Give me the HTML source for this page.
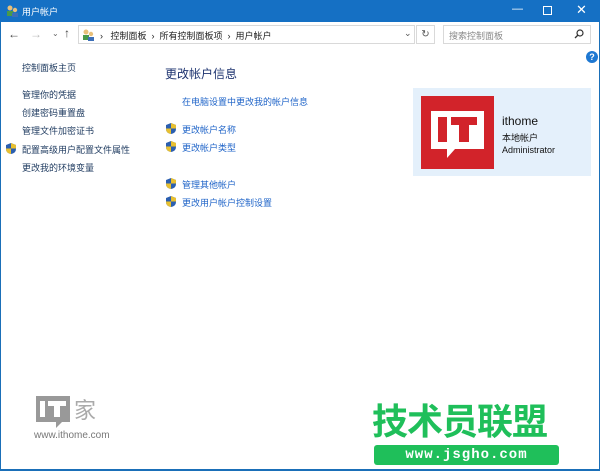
<!DOCTYPE html><html><head><meta charset="utf-8"><style>
*{margin:0;padding:0;box-sizing:border-box}
body{width:600px;height:471px;overflow:hidden;background:#fff;font-family:"Liberation Sans","Noto Sans CJK SC",sans-serif;position:relative}
.a{position:absolute;white-space:nowrap}
.l{font-size:9px;color:#1e3a5f}
.b{font-size:9px;color:#1f64c8}
.sh{position:absolute;width:10px;height:11px}
</style></head><body>
<div class="a" style="left:0;top:0;width:600px;height:22px;background:#1570c4"></div>
<div class="a" style="left:0;top:22px;width:1px;height:449px;background:#1a6fb8"></div>
<div class="a" style="left:599px;top:22px;width:1px;height:449px;background:#1a6fb8"></div>
<div class="a" style="left:0;top:469px;width:600px;height:2px;background:#1a6fb8"></div>
<svg class="a" style="left:6px;top:4px" width="13" height="13"><circle cx="4" cy="4" r="2.5" fill="#e8c07a"/><rect x="1" y="7" width="6" height="5" fill="#4a9a4a"/><circle cx="9" cy="6" r="2.2" fill="#e8c07a"/><rect x="6" y="9" width="6" height="4" fill="#3c6fb8"/></svg>
<div class="a" style="left:22px;top:5px;font-size:9px;color:#fff">用户帐户</div>
<div class="a" style="left:512px;top:3px;font-size:11px;color:#fff">—</div>
<div class="a" style="left:543px;top:6px;width:9px;height:9px;border:1px solid #fff"></div>
<div class="a" style="left:576px;top:2px;font-size:13px;color:#fff">✕</div>
<div class="a" style="left:8px;top:27px;font-size:12px;color:#444">←</div>
<div class="a" style="left:30px;top:27px;font-size:12px;color:#bbb">→</div>
<div class="a" style="left:52px;top:29px;font-size:8px;color:#666">⌄</div>
<div class="a" style="left:64px;top:26px;font-size:12px;color:#444">↑</div>
<div class="a" style="left:78px;top:25px;width:337px;height:19px;border:1px solid #d9d9d9"></div>
<svg class="a" style="left:82px;top:28px" width="13" height="13"><circle cx="4" cy="4" r="2.5" fill="#e8c07a"/><rect x="1" y="7" width="6" height="5" fill="#4a9a4a"/><circle cx="9" cy="6" r="2.2" fill="#e8c07a"/><rect x="6" y="9" width="6" height="4" fill="#3c6fb8"/></svg>
<div class="a" style="left:100px;top:29px;font-size:9px;color:#222">›&nbsp;&nbsp; 控制面板 &nbsp;›&nbsp; 所有控制面板项 &nbsp;›&nbsp; 用户帐户</div>
<div class="a" style="left:404px;top:28px;font-size:9px;color:#555">⌄</div>
<div class="a" style="left:416px;top:25px;width:19px;height:19px;border:1px solid #d9d9d9;font-size:10px;color:#555;text-align:center;line-height:17px">↻</div>
<div class="a" style="left:443px;top:25px;width:148px;height:19px;border:1px solid #d9d9d9"></div>
<div class="a" style="left:449px;top:29px;font-size:9px;color:#888">搜索控制面板</div>
<svg class="a" style="left:574px;top:29px" width="10" height="10"><circle cx="6" cy="4" r="3" fill="none" stroke="#333" stroke-width="1.2"/><line x1="4" y1="6" x2="1" y2="9" stroke="#333" stroke-width="1.3"/></svg>
<div class="a" style="left:586px;top:51px;width:12px;height:12px;border-radius:50%;background:#1e78d2;color:#fff;font-size:9px;font-weight:bold;text-align:center;line-height:12px">?</div>
<div class="a l" style="left:22px;top:61px">控制面板主页</div>
<div class="a l" style="left:22px;top:88px">管理你的凭据</div>
<div class="a l" style="left:22px;top:106px">创建密码重置盘</div>
<div class="a l" style="left:22px;top:124px">管理文件加密证书</div>
<div class="a l" style="left:22px;top:143px">配置高级用户配置文件属性</div>
<div class="a l" style="left:22px;top:161px">更改我的环境变量</div>
<div class="a" style="left:165px;top:65px;font-size:12px;color:#1e3470">更改帐户信息</div>
<div class="a b" style="left:182px;top:95px">在电脑设置中更改我的帐户信息</div>
<div class="a b" style="left:182px;top:123px">更改帐户名称</div>
<div class="a b" style="left:182px;top:141px">更改帐户类型</div>
<div class="a b" style="left:182px;top:178px">管理其他帐户</div>
<div class="a b" style="left:182px;top:196px">更改用户帐户控制设置</div>
<svg width="0" height="0" style="position:absolute"><defs><g id="s"><path d="M5 0 L10 2 L10 6 Q10 10 5 11 Q0 10 0 6 L0 2Z" fill="#2b5fb0"/><path d="M5 0 L10 2 L10 5.5 L5 5.5Z" fill="#e8c030"/><path d="M0 5.5 L5 5.5 L5 11 Q0 10 0 6Z" fill="#e8c030"/></g></defs></svg>
<svg class="sh" style="left:6px;top:143px"><use href="#s"/></svg>
<svg class="sh" style="left:166px;top:123px"><use href="#s"/></svg>
<svg class="sh" style="left:166px;top:141px"><use href="#s"/></svg>
<svg class="sh" style="left:166px;top:178px"><use href="#s"/></svg>
<svg class="sh" style="left:166px;top:196px"><use href="#s"/></svg>
<div class="a" style="left:413px;top:88px;width:178px;height:88px;background:#e4f0fb"></div>
<div class="a" style="left:421px;top:96px;width:73px;height:73px;background:#d2232a"></div>
<svg class="a" style="left:421px;top:96px" width="73" height="73"><path d="M10 15 H63 V53 H34 L26 62 V53 H10Z" fill="#fff"/><rect x="17" y="21" width="9" height="25" fill="#d2232a"/><rect x="30" y="21" width="26" height="8" fill="#d2232a"/><rect x="38" y="21" width="10" height="25" fill="#d2232a"/></svg>
<div class="a" style="left:502px;top:114px;font-size:12px;color:#111">ithome</div>
<div class="a" style="left:502px;top:131px;font-size:9px;color:#111">本地帐户</div>
<div class="a" style="left:502px;top:145px;font-size:9px;color:#111">Administrator</div>
<svg class="a" style="left:36px;top:393px" width="80" height="35"><rect x="0" y="3" width="34" height="26" fill="#999"/><path d="M20 29 L26 29 L20 35Z" fill="#999"/><rect x="4" y="8" width="5" height="16" fill="#fff"/><rect x="12" y="8" width="18" height="5" fill="#fff"/><rect x="18" y="8" width="6" height="16" fill="#fff"/><text x="38" y="25" font-size="22" fill="#aaa" font-family="Noto Sans CJK SC">家</text></svg>
<div class="a" style="left:34px;top:430px;font-size:10px;color:#777">www.ithome.com</div>
<div class="a" style="left:372px;top:399px;font-size:36px;font-weight:bold;color:#1fbf5a;font-family:'Noto Sans CJK SC',sans-serif;line-height:40px;letter-spacing:-1px">技术员联盟</div>
<div class="a" style="left:374px;top:445px;width:185px;height:20px;background:#1fbf5a;border-radius:3px;color:#fff;font-size:14px;font-weight:bold;text-align:center;line-height:20px;letter-spacing:1px;font-family:'Liberation Mono',monospace">www.jsgho.com</div>
</body></html>
